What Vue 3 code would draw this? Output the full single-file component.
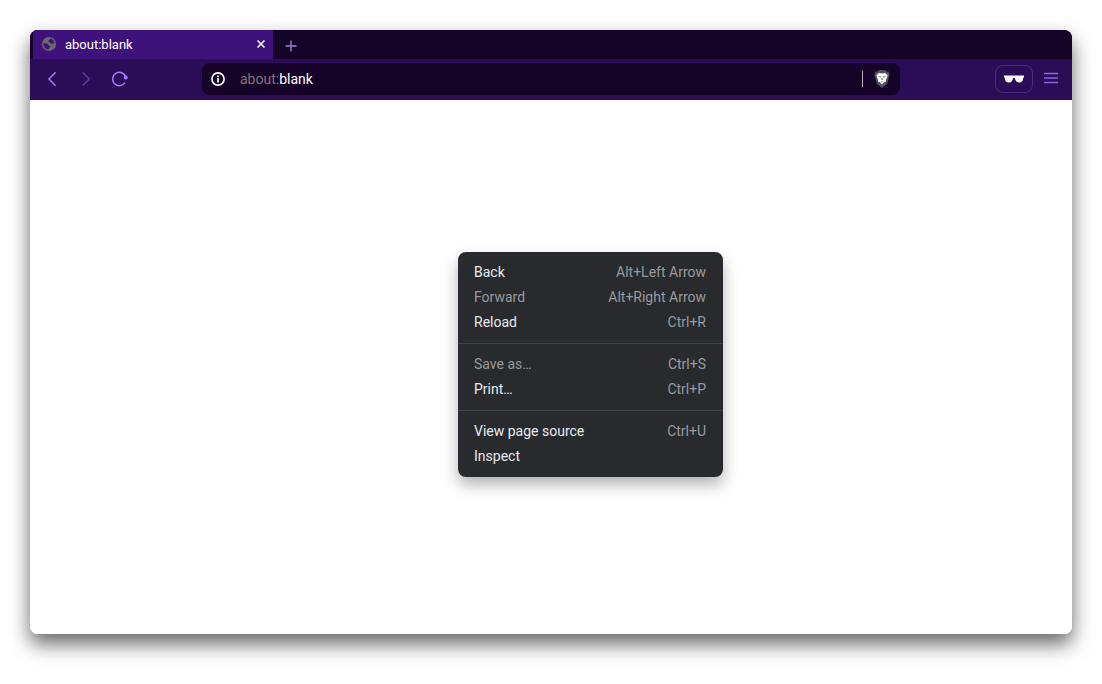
<script setup>
const groups = [
  [
    { label: 'Back', keys: 'Alt+Left Arrow' },
    { label: 'Forward', keys: 'Alt+Right Arrow', disabled: true },
    { label: 'Reload', keys: 'Ctrl+R' },
  ],
  [
    { label: 'Save as…', keys: 'Ctrl+S', disabled: true },
    { label: 'Print…', keys: 'Ctrl+P' },
  ],
  [
    { label: 'View page source', keys: 'Ctrl+U' },
    { label: 'Inspect', keys: '' },
  ],
]
</script>

<template>
  <div class="desktop">
    <div class="window">
      <header class="tabs">
        <div class="tab">
          <svg class="globe" viewBox="0 0 14 14" width="14" height="14" aria-hidden="true">
            <circle cx="7" cy="7" r="7" fill="#686868" />
            <path d="M1.500 6.300c1.600-.2 3.200-.1 4.300.8.900.7.700 1.700 1.900 1.900 1 .2.700 1-.1 1.400-.9.500-.6 1.200-1.200 2C3.500 12.200 1.400 9.800 1.500 6.300z" fill="#3f127b" />
            <path d="M8.300 1.500c-.2 1.500-1 1.600-1.900 1.900-.6.200-.3 1.200.5 1.400 1.200.2.900 1.400 2 1.800 1.300.4 2.200.1 3.500-.6C12 3.500 10.500 2 8.300 1.500z" fill="#3f127b" />
          </svg>
          <span class="title">about:blank</span>
          <button class="close" type="button" aria-label="Close tab">
            <svg viewBox="0 0 8 8" width="8" height="8"><path d="m.5.5 7 7m0-7-7 7" fill="none" stroke="#fff" stroke-width="1.500" /></svg>
          </button>
        </div>
        <button class="new-tab" type="button" aria-label="New tab">
          <svg viewBox="0 0 12 12" width="12" height="12"><path d="M6 .5v11M.5 6h11" fill="none" stroke="#9a83cf" stroke-width="1.400" /></svg>
        </button>
      </header>
      <nav class="toolbar">
        <div class="nav-buttons">
          <button type="button" aria-label="Back">
            <svg viewBox="0 0 16 16" width="16" height="16"><path d="M11.600 1.300 5 8l6.600 6.700" fill="none" stroke="#a47cff" stroke-width="1.500" /></svg>
          </button>
          <button type="button" aria-label="Forward" disabled>
            <svg viewBox="0 0 16 16" width="16" height="16"><path d="M4.600 1.300 11.200 8l-6.600 6.700" fill="none" stroke="#5d3a9d" stroke-width="1.500" /></svg>
          </button>
          <button type="button" aria-label="Reload">
            <svg viewBox="0 0 16 16" width="16" height="16">
              <path d="M13 11.600A6.700 6.700 0 1 1 13.700 6" fill="none" stroke="#a47cff" stroke-width="1.500" />
              <circle cx="13.700" cy="6.600" r="2" fill="#a47cff" />
            </svg>
          </button>
        </div>
        <div class="address">
          <svg viewBox="0 0 14 14" width="14" height="14" aria-hidden="true">
            <circle cx="7" cy="7" r="6.100" fill="none" stroke="#fff" stroke-width="1.600" />
            <path d="M7 6v4.500M7 3.500v1.500" stroke="#fff" stroke-width="1.700" />
          </svg>
          <span class="url"><span class="scheme">about:</span>blank</span>
          <span class="divider"></span>
          <button type="button" aria-label="Shields">
            <svg viewBox="0 0 16 18" width="16" height="18">
              <path d="M5 0h6l1.700 1.600 2.100.2.800 2.700-.6 2.200-1.500 6.200L12 15l-4 2.900L4 15l-1.500-2.100L1 6.700.4 4.500l.8-2.700 2.100-.2z" fill="#504e61" />
              <path d="m5 3 3 .5L11 3l2.500 1.900-.4 2.800-1.400 2.100.3 1.700-2 .7L8 14.500l-2-2.300-2-.7.300-1.700-1.400-2.100-.4-2.800z" fill="#fff" />
              <path d="m4.500 6.300 2.500.2v1.100l-1.700-.3zM11.500 6.300l-2.500.2v1.100l1.700-.3zM7.600 8h.8l.2 1.700-.6.700-.6-.7zM6.300 11.100l1.700.7 1.700-.7L8 12.600z" fill="#504e61" />
            </svg>
          </button>
        </div>
        <div class="actions">
          <button class="private" type="button" aria-label="Private window">
            <svg viewBox="0 0 20 8" width="20" height="8"><path d="M0 .5h20v1.700l-.8.500c-.2 2.700-1.200 4.800-4 4.800-2.700 0-4-2-4.300-4.500H9.100C8.800 5.500 7.500 7.500 4.800 7.500 2 7.500 1 5.400.8 2.700L0 2.200z" fill="#fff" /></svg>
          </button>
          <button class="main-menu" type="button" aria-label="Main menu">
            <svg viewBox="0 0 14 12" width="14" height="12"><path d="M0 1.500h14M0 6h14M0 10.500h14" stroke="#8c63e0" stroke-width="1.500" /></svg>
          </button>
        </div>
      </nav>
      <main class="page">
        <div class="menu" role="menu">
          <div v-for="(group, i) in groups" :key="i" class="group" role="group">
            <button v-for="item in group" :key="item.label" class="item" type="button" role="menuitem" :disabled="item.disabled">
              <span>{{ item.label }}</span>
              <span class="keys">{{ item.keys }}</span>
            </button>
          </div>
        </div>
      </main>
    </div>
  </div>
</template>

<style>
body {
  background: #fff;
}
</style>

<style scoped>
.desktop {
  box-sizing: border-box;
  display: flex;
  min-height: 100vh;
  padding: 30px 30px 50px;
  overflow: hidden;
  font-family: Roboto, "Liberation Sans", sans-serif;
  font-size: 14px;
}
button {
  display: flex;
  align-items: center;
  justify-content: center;
  margin: 0;
  padding: 0;
  border: 0;
  background: none;
  color: inherit;
  font: inherit;
}
svg {
  display: block;
  flex: none;
}
.window {
  flex: 1;
  display: flex;
  flex-direction: column;
  border-radius: 8px;
  background: linear-gradient(#150427 60px, #fff 60px);
  box-shadow: 0 10px 20px rgba(0, 0, 0, 0.6);
}
.tabs {
  display: flex;
  height: 29px;
  padding-left: 3px;
  border-radius: 8px 8px 0 0;
  background: #150427;
}
.tab {
  box-sizing: border-box;
  display: flex;
  align-items: center;
  width: 240px;
  padding: 0 8px 1px 9px;
  border-radius: 4px 2px 0 0;
  background: #3f127b;
  color: #fff;
}
.title {
  flex: 1;
  margin-left: 9px;
  font-size: 13px;
}
.new-tab {
  width: 36px;
  padding-top: 3px;
}
.toolbar {
  box-sizing: border-box;
  display: grid;
  grid-template-columns: 172px 1fr 172px;
  align-items: center;
  height: 41px;
  padding-bottom: 1px;
  background: #2b0c57;
}
.nav-buttons {
  display: flex;
  gap: 18px;
  padding-left: 14px;
}
.address {
  display: flex;
  align-items: center;
  height: 32px;
  padding: 0 10px 0 9px;
  border-radius: 8px;
  background: #150427;
  color: #fff;
}
.url {
  flex: 1;
  margin-left: 15px;
}
.scheme {
  color: #85717f;
}
.divider {
  width: 1px;
  height: 16px;
  margin-right: 11px;
  background: #b8b3bf;
}
.actions {
  display: flex;
  align-items: center;
  justify-content: flex-end;
  gap: 11px;
  padding-right: 14px;
}
.private {
  box-sizing: border-box;
  width: 38px;
  height: 28px;
  border: 1px solid #4d2b82;
  border-radius: 8px;
}
.main-menu {
  padding-bottom: 2px;
}
.page {
  position: relative;
  flex: 1;
  min-height: 400px;
  border-radius: 0 0 8px 8px;
  background: #fff;
}
.menu {
  position: absolute;
  top: 152px;
  left: 428px;
  width: 265px;
  border-radius: 8px;
  background: #292a2d;
  box-shadow: 0 8px 16px rgba(0, 0, 0, 0.3);
  color: #e8eaed;
}
.group {
  padding: 8px 0;
}
.group + .group {
  border-top: 1px solid #3f4145;
}
.item {
  justify-content: space-between;
  width: 100%;
  height: 25px;
  padding: 0 17px 2px 16px;
}
.item:disabled,
.keys {
  color: #979ba0;
}
</style>
